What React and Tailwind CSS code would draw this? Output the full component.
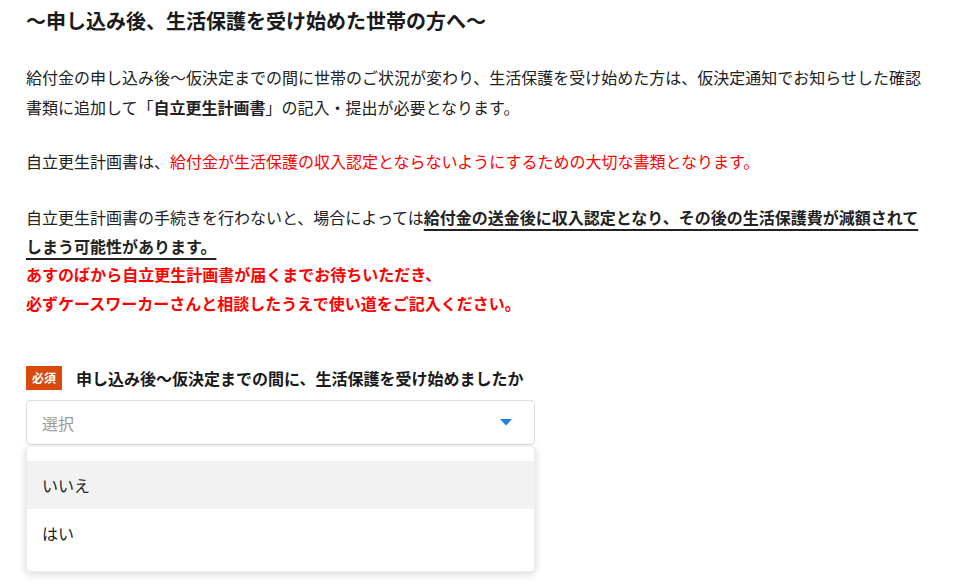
export default function App() {
    const font = { fontFamily: '"Noto Sans CJK JP", "Noto Sans", sans-serif' };

    return (
        <div className="bg-white min-h-[585px] px-[26px] pt-[6px] text-[#222] overflow-hidden" style={font}>
            <h2 className="text-[20px] font-bold leading-[30px] text-[#1a1a1a]">〜申し込み後、生活保護を受け始めた世帯の方へ〜</h2>

            <p className="mt-[26px] text-[16px] leading-[30px]">
                給付金の申し込み後〜仮決定までの間に世帯のご状況が変わり、生活保護を受け始めた方は、仮決定通知でお知らせした確認書類に追加して「<span className="font-bold">自立更生計画書</span>」の記入・提出が必要となります。
            </p>

            <p className="mt-[24px] text-[16px] leading-[30px]">
                自立更生計画書は、<span className="text-[#ff0000]">給付金が生活保護の収入認定とならないようにするための大切な書類となります。</span>
            </p>

            <div className="mt-[27px] text-[16px] leading-[28.5px]">
                <p>
                    自立更生計画書の手続きを行わないと、場合によっては<span className="font-bold underline underline-offset-[5px] decoration-[1.5px]">給付金の送金後に収入認定となり、その後の生活保護費が減額されてしまう可能性があります。 </span>
                </p>
                <p className="font-bold text-[#ff0000]">
                    あすのばから自立更生計画書が届くまでお待ちいただき、<br />
                    必ずケースワーカーさんと相談したうえで使い道をご記入ください。
                </p>
            </div>

            <div className="mt-[49px] w-[509px]">
                <div className="flex items-center gap-[14px]">
                    <span className="w-[36px] h-[24px] flex items-center justify-center bg-[#d94a0c] text-white text-[12px] font-bold">必須</span>
                    <span className="text-[16px] font-bold text-[#1a1a1a]">申し込み後〜仮決定までの間に、生活保護を受け始めましたか</span>
                </div>

                <div className="relative mt-[10px]">
                    <div className="h-[45px] border border-[#dcdcdc] rounded-[4px] flex items-center justify-between pl-[15px] pr-[22px]">
                        <span className="text-[16px] text-[#9a9a9a]">選択</span>
                        <svg width="12" height="7" viewBox="0 0 12 7">
                            <path d="M0 0 H12 L6 6.5 Z" fill="#1a82e2" />
                        </svg>
                    </div>
                    <div className="absolute left-0 right-0 top-[46px] bg-white rounded-[4px] shadow-[0_2px_8px_rgba(0,0,0,0.16)] border border-[#ececec] py-[14px]">
                        <div className="h-[48px] flex items-center px-[15px] bg-[#f2f2f2] text-[16px]">いいえ</div>
                        <div className="h-[48px] flex items-center px-[15px] text-[16px]">はい</div>
                    </div>
                </div>
            </div>
        </div>
    );
}
